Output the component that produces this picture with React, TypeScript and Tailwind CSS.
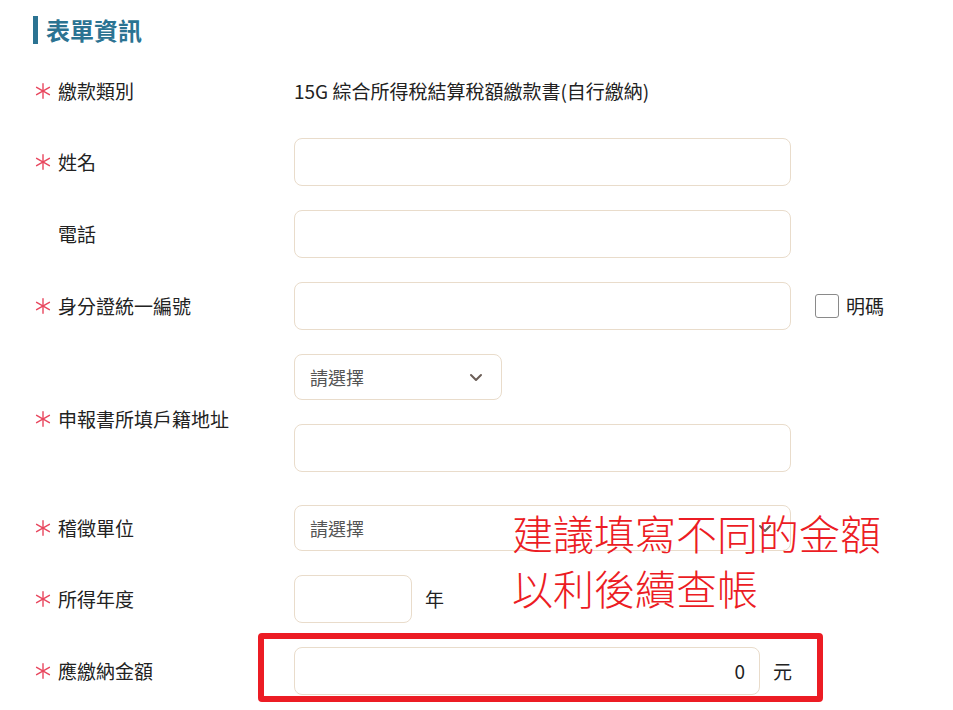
import type { ReactNode } from "react";

const FONT = "font-['Noto_Sans_CJK_TC','Noto_Sans',sans-serif]";

function Star() {
  return (
    <svg width="16" height="16" viewBox="0 0 16 16" className="text-[#e8475e]">
      <g stroke="currentColor" strokeWidth="1.4" strokeLinecap="round">
        <line x1="8" y1="0.7" x2="8" y2="15.3" />
        <line x1="1.6" y1="4.3" x2="14.4" y2="11.7" />
        <line x1="1.6" y1="11.7" x2="14.4" y2="4.3" />
      </g>
    </svg>
  );
}

function Label({ text, required = true }: { text: string; required?: boolean }) {
  return (
    <div className="flex w-[261px] shrink-0 items-center">
      <div className="flex w-[20px] justify-center">{required && <Star />}</div>
      <span className="ml-[5px] text-[19px] text-[#222]">{text}</span>
    </div>
  );
}

function Row({ label, required, children, className = "" }: { label: string; required?: boolean; children: ReactNode; className?: string }) {
  return (
    <div className={`flex items-center ${className}`}>
      <Label text={label} required={required} />
      {children}
    </div>
  );
}

function Input({ w = "w-[497px]", value }: { w?: string; value?: string }) {
  return (
    <div className={`flex h-12 ${w} items-center justify-end rounded-lg border border-[#e9dccb] bg-white px-[14px] text-[19px] text-[#222]`}>
      {value}
    </div>
  );
}

function Select({ w = "w-[497px]", chevron = true }: { w?: string; chevron?: boolean }) {
  return (
    <div className={`flex h-[46px] ${w} items-center justify-between rounded-lg border border-[#e9dccb] bg-white pl-[15px] pr-[17px]`}>
      <span className="text-[18px] text-[#555]">請選擇</span>
      {chevron && (
        <svg width="16" height="16" viewBox="0 0 16 16" fill="none" stroke="#6b5e57" strokeWidth="2" strokeLinecap="round" strokeLinejoin="round">
          <path d="M3 6l5 5 5-5" />
        </svg>
      )}
    </div>
  );
}

export default function App() {
  return (
    <div className={`relative min-h-[710px] w-[953px] bg-white pl-[33px] pt-[16px] ${FONT}`}>
      <div className="flex h-[28px] items-center">
        <div className="h-[28px] w-[5px] bg-[#2b7392]" />
        <span className="ml-[8px] text-[24px] font-bold leading-none text-[#2b7392]">表單資訊</span>
      </div>

      <Row label="繳款類別" className="mt-[23px] h-12">
        <span className="text-[19px] text-[#222]">15G 綜合所得稅結算稅額繳款書(自行繳納)</span>
      </Row>

      <Row label="姓名" className="mt-[23px]">
        <Input />
      </Row>

      <Row label="電話" required={false} className="mt-[24px]">
        <Input />
      </Row>

      <Row label="身分證統一編號" className="mt-[24px]">
        <Input />
        <div className="ml-[24px] flex items-center">
          <div className="h-[24px] w-[24px] rounded-[3px] border border-[#8a8a8a] bg-white" />
          <span className="ml-[7px] text-[19px] text-[#222]">明碼</span>
        </div>
      </Row>

      <div className="mt-[24px] flex items-center">
        <div className="pt-[12px]">
          <Label text="申報書所填戶籍地址" />
        </div>
        <div className="flex flex-col gap-[24px]">
          <Select w="w-[208px]" />
          <Input />
        </div>
      </div>

      <Row label="稽徵單位" className="mt-[33px]">
        <Select />
      </Row>

      <Row label="所得年度" className="mt-[24px]">
        <Input w="w-[118px]" />
        <span className="ml-[13px] text-[19px] text-[#222]">年</span>
      </Row>

      <Row label="應繳納金額" className="mt-[24px]">
        <Input w="w-[466px]" value="0" />
        <span className="ml-[13px] text-[19px] text-[#222]">元</span>
      </Row>

      <div className="pointer-events-none absolute left-[258px] top-[633px] h-[69px] w-[565px] rounded-[4px] border-[6px] border-[#ec1c24]" />

      <div className="pointer-events-none absolute left-[512px] top-[505px] text-[41px] font-light leading-[55px] text-[#ec1c24]">
        <div>建議填寫不同的金額</div>
        <div>以利後續查帳</div>
      </div>
    </div>
  );
}
